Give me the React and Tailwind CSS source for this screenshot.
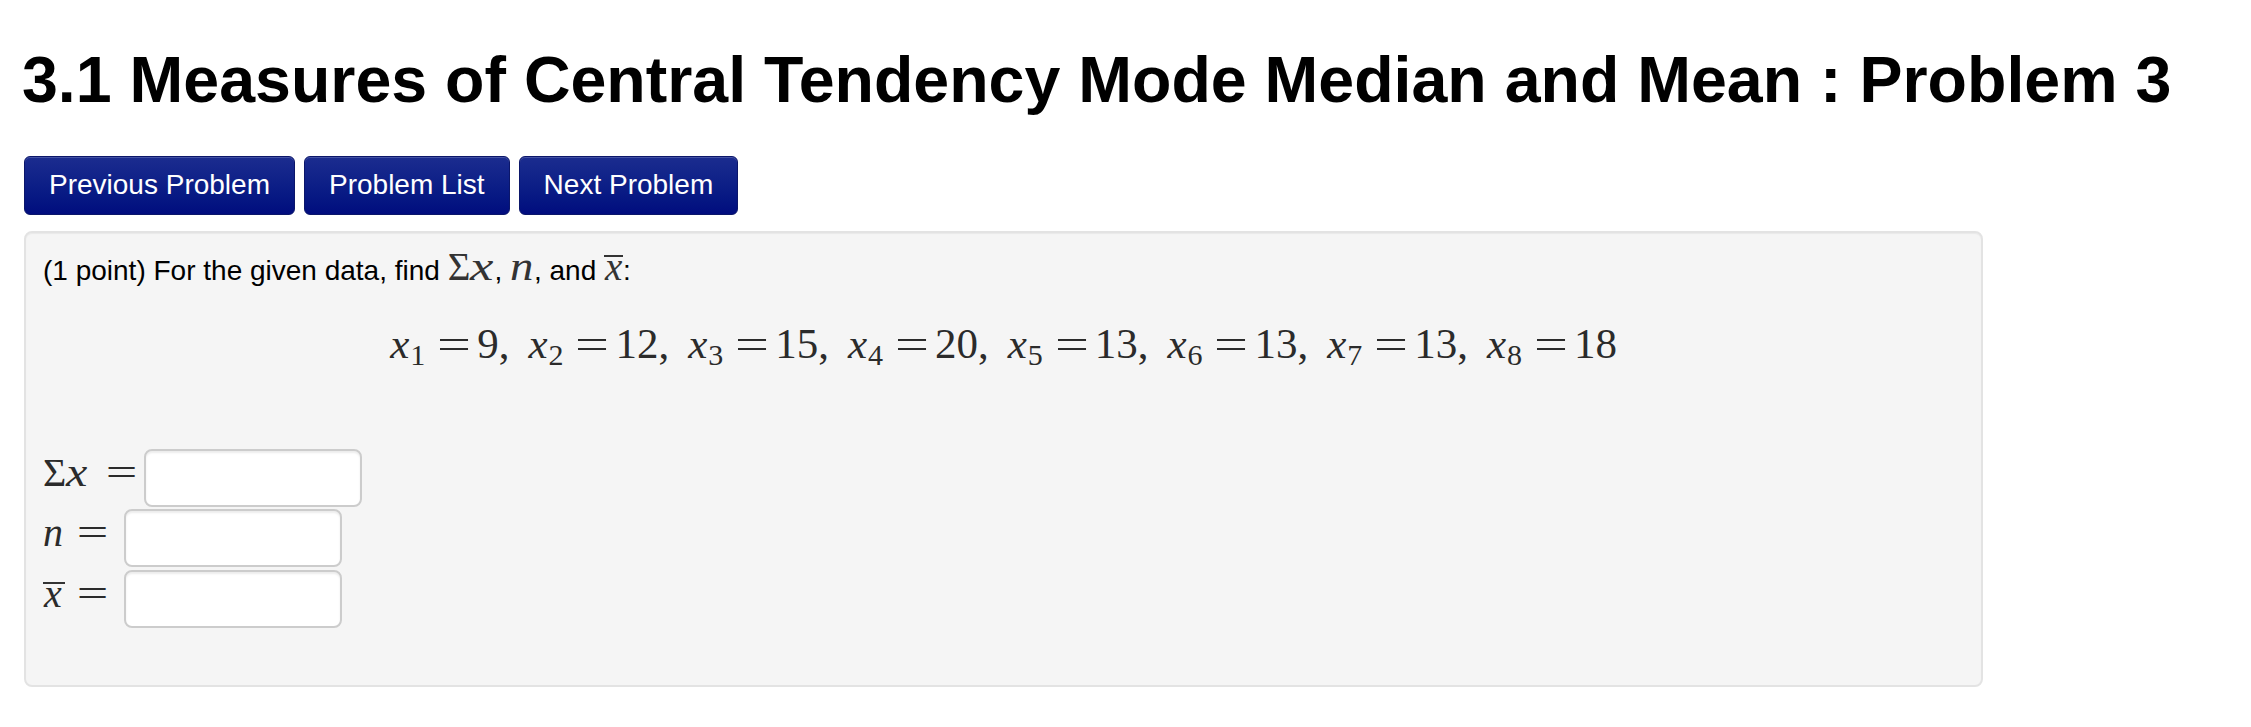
import React from 'react';

const data = [
  [1, '9'],
  [2, '12'],
  [3, '15'],
  [4, '20'],
  [5, '13'],
  [6, '13'],
  [7, '13'],
  [8, '18'],
];

const Eq = ({ className }) => (
  <span className={`inline-block text-center leading-none scale-x-[1.4] ${className}`}>=</span>
);

const Bar = ({ children, className = '' }) => (
  <span className={`inline-block border-t-2 border-[#333] leading-[0.5] ${className}`}>{children}</span>
);

const NavButton = ({ children }) => (
  <button className="h-[59px] px-[24px] rounded-[6px] border border-[#0b166a] bg-linear-to-b from-[#1b2c8f] to-[#010c7e] text-white text-[28px] leading-none shadow-[inset_0_1px_0_rgba(255,255,255,0.18)]">
    {children}
  </button>
);

const AnswerInput = ({ className = '' }) => (
  <input
    type="text"
    className={`w-[218px] h-[58px] bg-white border-2 border-[#cccccc] rounded-[8px] shadow-[inset_0_2px_2px_rgba(0,0,0,0.075)] outline-none ${className}`}
  />
);

export default function App() {
  return (
    <div className="min-h-screen bg-white font-['Liberation_Sans',Arial,sans-serif] text-black">
      <div className="pl-[24px] pt-[45px]">
        <h1 className="-ml-[2px] text-[64.5px] font-bold leading-[1.1] whitespace-nowrap">
          3.1 Measures of Central Tendency Mode Median and Mean : Problem 3
        </h1>

        <div className="mt-[40px] flex gap-[9px]">
          <NavButton>Previous Problem</NavButton>
          <NavButton>Problem List</NavButton>
          <NavButton>Next Problem</NavButton>
        </div>

        <div className="mt-[16px] w-[1959px] rounded-[8px] border-2 border-[#e3e3e3] bg-[#f5f5f5] pl-[17px] pr-[17px] pt-[14px] pb-[57px] shadow-[inset_0_1px_1px_rgba(0,0,0,0.05)]">
          <p className="text-[28px] leading-[40px] whitespace-nowrap">
            (1 point) For the given data, find{' '}
            <span className="font-['Liberation_Serif',serif] text-[39px] leading-none text-[#333]">
              Σ<i className="inline-block w-[24px] leading-none origin-left scale-x-[1.35]">x</i>
            </span>
            ,{' '}
            <span className="font-['Liberation_Serif',serif] text-[39px] leading-none text-[#333]">
              <i className="inline-block w-[24px] leading-none origin-left scale-x-[1.2]">n</i>
            </span>
            , and{' '}
            <span className="font-['Liberation_Serif',serif] text-[39px] text-[#333]">
              <Bar className="w-[19px] pl-[1px]">
                <i>x</i>
              </Bar>
            </span>
            :
          </p>

          <div className="mt-[28px] text-center font-['Liberation_Serif',serif] text-[43px] leading-[50px] text-[#2b2b2b] whitespace-nowrap">
            {data.map(([i, v], idx) => (
              <span key={i}>
                <i className="inline-block w-[20px] text-left leading-none">x</i>
                <span className="text-[30px] leading-[0] align-[-7px]">{i}</span>
                <Eq className="w-[34px] ml-[12px] mr-[6px]" />
                {v}
                {idx < data.length - 1 && <span className="mr-[19px]">,</span>}
              </span>
            ))}
          </div>

          <div className="mt-[80px] flex flex-col font-['Liberation_Serif',serif] text-[40px] text-[#2b2b2b]">
            <div className="flex items-start">
              <span className="leading-[48px] whitespace-nowrap">
                Σ<i className="inline-block w-[24px] leading-none origin-left scale-x-[1.2]">x</i>
                <Eq className="w-[27px] ml-[18px]" />
              </span>
              <AnswerInput className="ml-[9px]" />
            </div>
            <div className="mt-[2px] flex items-start">
              <span className="leading-[48px] whitespace-nowrap">
                <i className="inline-block w-[21px] leading-none">n</i>
                <Eq className="w-[27px] ml-[15px]" />
              </span>
              <AnswerInput className="ml-[18px]" />
            </div>
            <div className="mt-[3px] flex items-start">
              <span className="leading-[48px] whitespace-nowrap">
                <Bar className="w-[22px] pl-[1px]">
                  <i>x</i>
                </Bar>
                <Eq className="w-[27px] ml-[14px]" />
              </span>
              <AnswerInput className="ml-[18px]" />
            </div>
          </div>
        </div>
      </div>
    </div>
  );
}
